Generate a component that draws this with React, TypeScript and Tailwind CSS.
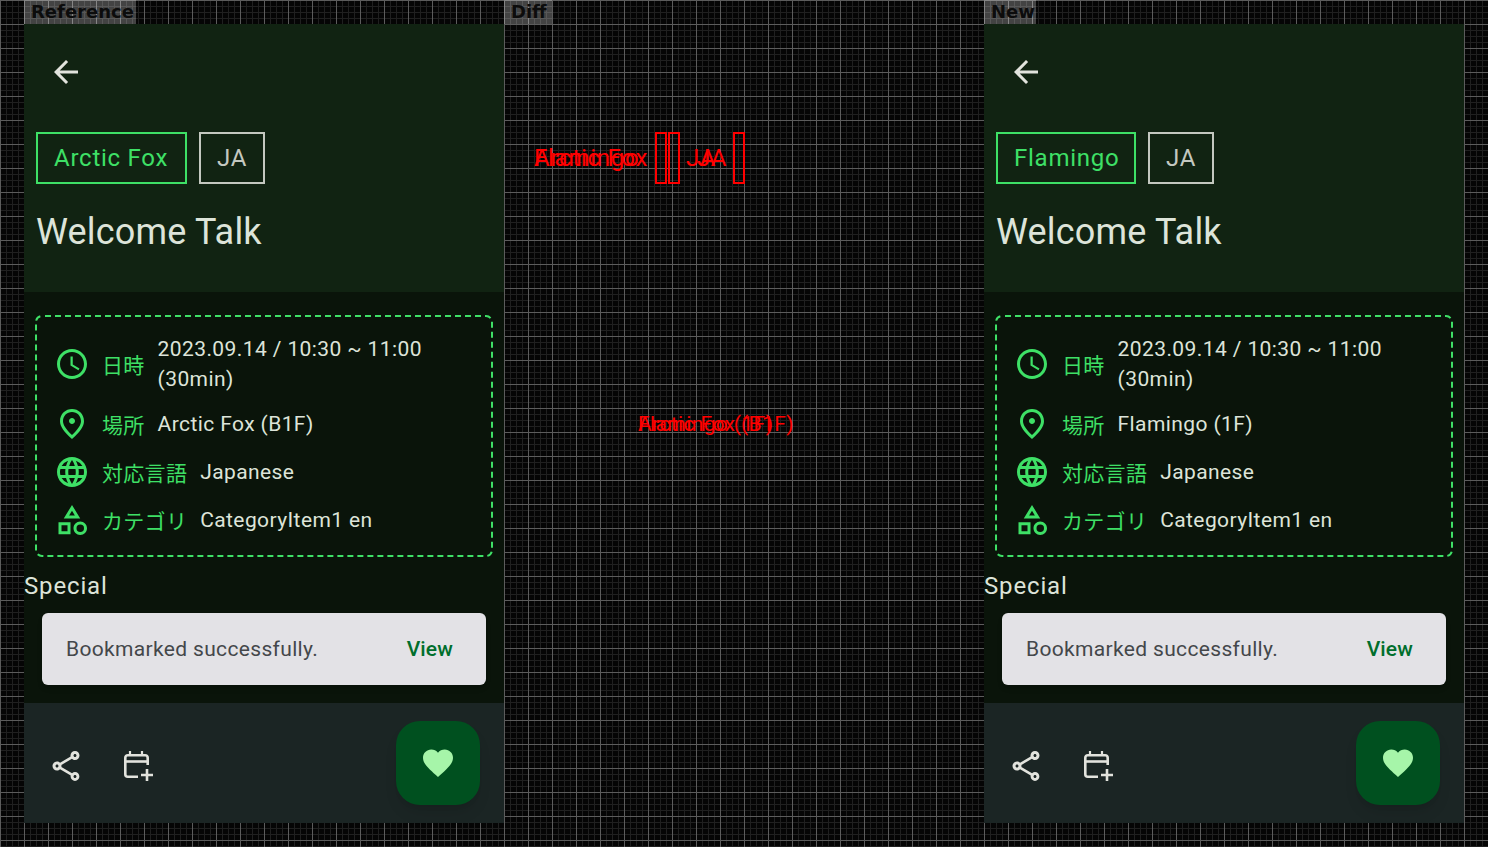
import React from "react";
import {
  MdArrowBack,
  MdAccessTime,
  MdOutlinePlace,
  MdLanguage,
  MdOutlineCategory,
  MdOutlineShare,
  MdFavorite,
} from "react-icons/md";

const CalendarAdd = () => (
  <svg width="36" height="36" viewBox="0 0 36 36" fill="none" stroke="currentColor" strokeWidth="2.6">
    <path d="M18 28.7H7.8a2.5 2.5 0 0 1-2.5-2.5V9.8a2.5 2.5 0 0 1 2.5-2.5h17.4a2.5 2.5 0 0 1 2.5 2.5V17" />
    <path d="M5.3 13.5h22.4" />
    <path d="M10 3v4M22 3v4" strokeWidth="2.2" />
    <path d="M27 21v12M21 27h12" />
  </svg>
);

// dashes are 6 on / 4 off, which a css border can't do
const DashedOutline = () => (
  <svg className="absolute inset-0" width="458" height="242" fill="none" stroke="#3ee066" strokeWidth="2">
    <rect x="1" y="1" width="456" height="240" rx="6" strokeDasharray="6 4" strokeDashoffset="-3" />
  </svg>
);

type RowProps = {
  icon: React.ReactNode;
  label: string;
  className?: string;
  children: React.ReactNode;
};

const InfoRow = ({ icon, label, className, children }: RowProps) => (
  <div className={`flex items-center ${className ?? ""}`}>
    <span className="w-9 h-9 flex-shrink-0 text-[#3ee066]">{icon}</span>
    <span className="ml-3 mt-[3px] text-[#3ee066] text-[21px] leading-[30px] tracking-[0.3px] whitespace-nowrap">{label}</span>
    <div className="ml-[13px] text-[#dde4d9] text-[21px] leading-[30px] tracking-[0.4px]">{children}</div>
  </div>
);

const Screen = ({ room, floor, chipWidth }: { room: string; floor: string; chipWidth: string }) => (
  <div className="w-[480px] h-[799px] flex flex-col bg-[#0a140a] font-['Roboto','Noto_Sans_CJK_JP',sans-serif]">
    <div className="h-[268px] bg-[#112312] flex flex-col flex-shrink-0 pl-3">
      <div className="pt-[30px] pl-3 h-[108px] text-[#e2e3dd]">
        <MdArrowBack size={36} />
      </div>
      <div className="flex gap-3">
        <span className={`h-[52px] ${chipWidth} pl-4 flex items-center border-2 border-[#3ee066] text-[#3ee066] text-2xl tracking-[0.75px]`}>
          {room}
        </span>
        <span className="h-[52px] w-[66px] pl-4 flex items-center border-2 border-[#c4c8c0] text-[#c4c8c0] text-2xl tracking-[0.75px]">
          JA
        </span>
      </div>
      <h1 className="mt-[22px] text-[36px] leading-[52px] tracking-[0.18px] text-[#dde4d9]">Welcome Talk</h1>
    </div>

    <div className="flex-1 flex flex-col">
      <div className="relative mx-[11px] mt-[23px] h-[242px] px-[19px] pt-[19px]">
        <DashedOutline />
        <InfoRow icon={<MdAccessTime size={36} />} label="日時">
          <p className="whitespace-nowrap">2023.09.14 / 10:30 ~ 11:00</p>
          <p>(30min)</p>
        </InfoRow>
        <InfoRow className="mt-[12px]" icon={<MdOutlinePlace size={36} />} label="場所">
          {room} ({floor})
        </InfoRow>
        <InfoRow className="mt-[12px]" icon={<MdLanguage size={36} />} label="対応言語">
          Japanese
        </InfoRow>
        <InfoRow className="mt-[12px]" icon={<MdOutlineCategory size={36} />} label="カテゴリ">
          CategoryItem1 en
        </InfoRow>
      </div>
      <p className="mt-[13px] text-[#dde4d9] text-2xl leading-8 tracking-[0.85px]">Special</p>
      <div className="mx-[18px] mt-[11px] h-[72px] rounded-md bg-[#e3e2e6] flex items-center justify-between pl-6 pr-[33px] pt-[2px] shadow-md">
        <span className="text-[#44474a] text-[21px] tracking-[0.34px]">Bookmarked successfully.</span>
        <span className="text-[#006e2c] text-[21px] font-medium tracking-[0.15px]">View</span>
      </div>
    </div>

    <div className="h-[120px] flex-shrink-0 bg-[#1b2524] flex items-center pl-6 pr-6 text-[#e2e3dd]">
      <MdOutlineShare size={36} className="mt-[6px]" />
      <span className="ml-[36px] mt-[6px]">
        <CalendarAdd />
      </span>
      <div className="ml-auto w-[84px] h-[84px] rounded-[24px] bg-[#00501f] text-[#a6f5a9] flex items-center justify-center shadow-lg">
        <MdFavorite size={36} />
      </div>
    </div>
  </div>
);

const DiffText = ({ className, children }: { className: string; children: React.ReactNode }) => (
  <span className={`absolute text-[#ff0000] whitespace-nowrap ${className}`}>{children}</span>
);

const DiffPanel = () => (
  <div className="relative w-[480px] h-[799px] font-['Roboto',sans-serif]">
    <DiffText className="left-[30px] top-[118px] text-2xl leading-8 tracking-[0.75px]">Arctic Fox</DiffText>
    <DiffText className="left-[30px] top-[118px] text-2xl leading-8 tracking-[0.75px]">Flamingo</DiffText>
    <DiffText className="left-[182px] top-[118px] text-2xl leading-8 tracking-[0.75px]">JA</DiffText>
    <DiffText className="left-[193px] top-[118px] text-2xl leading-8 tracking-[0.75px]">JA</DiffText>
    <div className="absolute left-[151px] top-[108px] w-[12px] h-[52px] border-2 border-[#ff0000]" />
    <div className="absolute left-[164px] top-[108px] w-[12px] h-[52px] border-2 border-[#ff0000]" />
    <div className="absolute left-[229px] top-[108px] w-[12px] h-[52px] border-2 border-[#ff0000]" />
    <DiffText className="left-[134px] top-[385px] text-[21px] leading-[30px] tracking-[0.4px]">Arctic Fox (B1F)</DiffText>
    <DiffText className="left-[134px] top-[385px] text-[21px] leading-[30px] tracking-[0.4px]">Flamingo (1F)</DiffText>
  </div>
);

const Column = ({ title, labelWidth, children }: { title: string; labelWidth: string; children: React.ReactNode }) => (
  <div className="w-[480px] flex flex-col items-start">
    <div className={`h-6 ${labelWidth} pl-[7px] bg-white/25 text-[#0c0c0c] font-['DejaVu_Sans',sans-serif] font-bold text-[18px] leading-6`}>
      {title}
    </div>
    {children}
  </div>
);

export default function App() {
  return (
    <div className="w-[1488px] h-[847px] overflow-hidden bg-[#050505] bg-[linear-gradient(#5c5c5c_1px,transparent_1px),linear-gradient(90deg,#5c5c5c_1px,transparent_1px),linear-gradient(#202020_1px,transparent_1px),linear-gradient(90deg,#202020_1px,transparent_1px)] bg-[size:24px_24px,24px_24px,6px_6px,6px_6px]">
      <div className="flex pl-6">
        <Column title="Reference" labelWidth="w-[112px]">
          <Screen room="Arctic Fox" floor="B1F" chipWidth="w-[151px]" />
        </Column>
        <Column title="Diff" labelWidth="w-[48px]">
          <DiffPanel />
        </Column>
        <Column title="New" labelWidth="w-[52px]">
          <Screen room="Flamingo" floor="1F" chipWidth="w-[140px]" />
        </Column>
      </div>
    </div>
  );
}
